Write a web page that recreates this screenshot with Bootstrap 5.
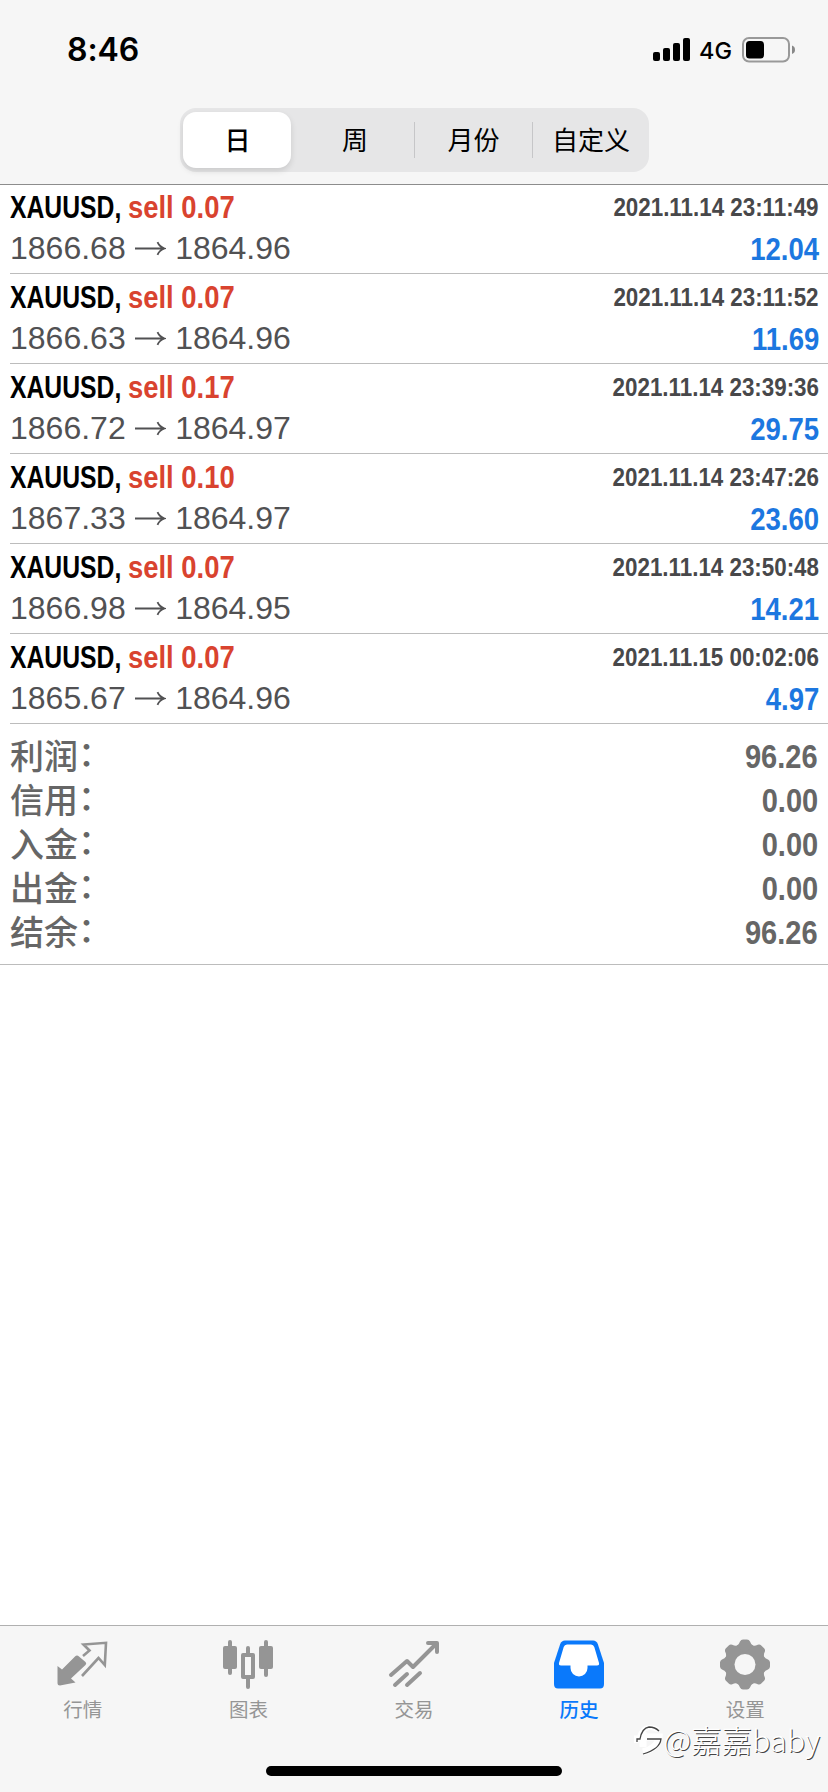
<!DOCTYPE html>
<html lang="zh-CN">
<head>
<meta charset="utf-8">
<meta name="viewport" content="width=device-width, initial-scale=1">
<title>历史</title>
<link href="https://cdn.jsdelivr.net/npm/bootstrap@5.3.0/dist/css/bootstrap.min.css" rel="stylesheet">
<script src="https://cdn.jsdelivr.net/npm/bootstrap@5.3.0/dist/js/bootstrap.bundle.min.js" defer></script>
<style>
body{font-family:"Liberation Sans","Noto Sans CJK SC",sans-serif;color:#000;background:#fff}
.screen{height:1792px;overflow:hidden}
.topbar{height:185px;background:#f6f6f6;border-bottom:1px solid #8c8c8c}
.statusbar{height:108px;padding:0 33px 8px 67px;font-family:Inter,sans-serif}
.clock{font-size:32px;font-weight:600;line-height:1;letter-spacing:-.1px}
.net{font-size:23.5px;font-weight:500;line-height:1;margin:2px 10px 0 8px}
.segments{width:469px;height:64px;background:#e6e6e7;border-radius:16px;padding:4px 0 4px 3px;font:26px "Noto Sans CJK SC",sans-serif}
.segments .nav-link{color:#000;padding:0 0 2px 2px;border-radius:0;line-height:54px;position:relative}
.segments .active{background:#fff;border-radius:13px;margin-right:4px;font-weight:500;box-shadow:0 3px 6px rgba(0,0,0,.12)}
.segments .split::before{content:"";position:absolute;left:0;top:10px;width:1px;height:36px;background:#c6c6c8}
.seg-day{width:112px}
.seg-week{width:119px}
.seg-month{width:118px}
.seg-custom{width:117px}
.deal{height:90px;margin-left:10px;padding:3px 9px 0 0;border-bottom:1px solid #bcbcbc;white-space:nowrap}
.deal:first-child{height:89px;padding-top:2px}
.tight{font-weight:700;transform:scaleX(.86);transform-origin:100% 50%}
.symbol{font-size:31.5px;line-height:40px;font-weight:700}
.pair,.side{display:inline-block;transform-origin:0 50%}
.pair{width:118px;transform:scaleX(.785)}
.side{color:#d9432f;transform:scaleX(.87)}
.stamp{font-size:26px;line-height:41px;margin-bottom:-1px;color:#48484a}
.price{font-size:32px;line-height:42px;color:#515153}
.price svg{margin:0 9px 5px 9.5px}
.gain{font-size:32px;line-height:44px;color:#1c77e0}
.summary{height:241px;padding:9px 10px 0 10px;border-bottom:1px solid #bcbcbc;color:#666}
.sumrow{height:44px;line-height:47px}
.sumrow .caption{font:500 34px/44px "Noto Sans CJK SC",sans-serif}
.colon{display:inline-block;transform:translate(0,-3px)}
.sumrow .tight{font-size:33px;transform:scaleX(.88)}
.tabs{height:167px;background:#f6f6f6;border-top:1px solid #b0b0b0;color:#959595}
.tabs .nav-link{color:inherit;padding:11.5px 0 0;font:19.5px/26px "Noto Sans CJK SC",sans-serif}
.tabs .nav-link.active{color:#0a79fb;font-weight:500;margin-left:-1px}
.tabs svg{display:block;margin:0 auto 6px}
.homebar{left:266px;bottom:16px;width:296px;height:10px;border-radius:5px;background:#000}
.credit{right:8px;bottom:32px;font:300 30.5px/42px "Noto Sans CJK SC",sans-serif;color:#fff;text-shadow:1px 1px 0 #444;white-space:nowrap}
</style>
</head>
<body>
<div class="screen d-flex flex-column position-relative">
<header class="topbar flex-shrink-0">
  <div class="statusbar d-flex align-items-center justify-content-between">
    <span class="clock">8:46</span>
    <div class="d-flex align-items-center">
      <svg width="38" height="24" viewBox="0 0 38 24"><rect x="0" y="14" width="7" height="9" rx="2"/><rect x="10" y="10" width="7" height="13" rx="2"/><rect x="20" y="5" width="7" height="18" rx="2"/><rect x="30" y="0" width="7" height="23" rx="2"/></svg>
      <span class="net">4G</span>
      <svg width="53" height="26" viewBox="0 0 53 26"><rect x="1" y="1" width="46" height="23.5" rx="6" fill="none" stroke="#999" stroke-width="2"/><rect x="4" y="4" width="18" height="17.5" rx="3.5"/><path d="M50 8.5q3 1 3 4.2t-3 4.3z" fill="#888"/></svg>
    </div>
  </div>
  <nav class="segments nav flex-nowrap mx-auto text-center">
    <div class="seg-day"><a class="nav-link active">日</a></div>
    <div class="seg-week"><a class="nav-link">周</a></div>
    <div class="seg-month"><a class="nav-link split">月份</a></div>
    <div class="seg-custom"><a class="nav-link split">自定义</a></div>
  </nav>
</header>
<svg width="0" height="0" class="position-absolute"><symbol id="arrow" viewBox="0 0 31 15"><path d="M0 7.5H29M22.5 1.2Q24.500 5.800 29.500 7.500Q24.500 9.200 22.500 13.800" fill="none" stroke="#515153" stroke-width="1.8"/></symbol></svg>
<main class="flex-grow-1">
  <section>
    <div class="deal"><div class="d-flex justify-content-between"><span class="symbol"><span class="pair">XAUUSD,</span><span class="side">sell 0.07</span></span><span class="tight stamp">2021.11.14 23:11:49</span></div><div class="d-flex justify-content-between"><span class="price">1866.68<svg width="31" height="15"><use href="#arrow"/></svg>1864.96</span><span class="tight gain">12.04</span></div></div>
    <div class="deal"><div class="d-flex justify-content-between"><span class="symbol"><span class="pair">XAUUSD,</span><span class="side">sell 0.07</span></span><span class="tight stamp">2021.11.14 23:11:52</span></div><div class="d-flex justify-content-between"><span class="price">1866.63<svg width="31" height="15"><use href="#arrow"/></svg>1864.96</span><span class="tight gain">11.69</span></div></div>
    <div class="deal"><div class="d-flex justify-content-between"><span class="symbol"><span class="pair">XAUUSD,</span><span class="side">sell 0.17</span></span><span class="tight stamp">2021.11.14 23:39:36</span></div><div class="d-flex justify-content-between"><span class="price">1866.72<svg width="31" height="15"><use href="#arrow"/></svg>1864.97</span><span class="tight gain">29.75</span></div></div>
    <div class="deal"><div class="d-flex justify-content-between"><span class="symbol"><span class="pair">XAUUSD,</span><span class="side">sell 0.10</span></span><span class="tight stamp">2021.11.14 23:47:26</span></div><div class="d-flex justify-content-between"><span class="price">1867.33<svg width="31" height="15"><use href="#arrow"/></svg>1864.97</span><span class="tight gain">23.60</span></div></div>
    <div class="deal"><div class="d-flex justify-content-between"><span class="symbol"><span class="pair">XAUUSD,</span><span class="side">sell 0.07</span></span><span class="tight stamp">2021.11.14 23:50:48</span></div><div class="d-flex justify-content-between"><span class="price">1866.98<svg width="31" height="15"><use href="#arrow"/></svg>1864.95</span><span class="tight gain">14.21</span></div></div>
    <div class="deal"><div class="d-flex justify-content-between"><span class="symbol"><span class="pair">XAUUSD,</span><span class="side">sell 0.07</span></span><span class="tight stamp">2021.11.15 00:02:06</span></div><div class="d-flex justify-content-between"><span class="price">1865.67<svg width="31" height="15"><use href="#arrow"/></svg>1864.96</span><span class="tight gain">4.97</span></div></div>
  </section>
  <section class="summary">
    <div class="sumrow d-flex justify-content-between"><span class="caption">利润<span class="colon">：</span></span><span class="tight">96.26</span></div>
    <div class="sumrow d-flex justify-content-between"><span class="caption">信用<span class="colon">：</span></span><span class="tight">0.00</span></div>
    <div class="sumrow d-flex justify-content-between"><span class="caption">入金<span class="colon">：</span></span><span class="tight">0.00</span></div>
    <div class="sumrow d-flex justify-content-between"><span class="caption">出金<span class="colon">：</span></span><span class="tight">0.00</span></div>
    <div class="sumrow d-flex justify-content-between"><span class="caption">结余<span class="colon">：</span></span><span class="tight">96.26</span></div>
  </section>
</main>
<footer class="flex-shrink-0">
  <nav class="tabs nav flex-nowrap align-items-start text-center">
    <div class="col"><a class="nav-link"><svg width="52" height="52" viewBox="0 0 52 52"><path d="M.5 28 5 31.500 18 18.500Q20 16.500 22 18.500L28.500 24Q30 25.500 28.500 27L14 40.500 18.500 44.500 3 47.500Q.5 47.500 .5 45Z" fill="currentColor"/><path d="M26 18 32.500 12.500 26.500 6.500 49 4.800 47.800 27 41.500 20 25 38" fill="none" stroke="currentColor" stroke-width="2.600"/></svg>行情</a></div>
    <div class="col"><a class="nav-link"><svg width="52" height="52" viewBox="0 0 52 52" fill="currentColor"><rect x="1" y="8" width="14" height="23" rx="2"/><rect x="6" y="2" width="4" height="35" rx="2"/><path d="M21 15h10q2 0 2 2v22q0 2-2 2H21q-2 0-2-2V17q0-2 2-2m2 4v18h6V19z" fill-rule="evenodd"/><rect x="24" y="8" width="4" height="9" rx="2"/><rect x="24" y="39" width="4" height="12" rx="2"/><rect x="37" y="8" width="14" height="23" rx="2"/><rect x="42" y="2" width="4" height="37" rx="2"/></svg>图表</a></div>
    <div class="col"><a class="nav-link"><svg width="52" height="52" viewBox="0 0 52 52" fill="none" stroke="currentColor" stroke-width="4" stroke-linecap="round" stroke-linejoin="round"><path d="M3 37 19 23l6 6L48 6M40 5h9v9"/><path d="m7 47 12-11M19 47l13-12"/></svg>交易</a></div>
    <div class="col"><a class="nav-link active"><svg width="52" height="52" viewBox="0 0 52 52"><path d="M12 2.500H40Q43.500 2.500 44.800 6L51 25V46Q51 50.500 47 50.500H5Q1 50.500 1 46V25L7.200 6Q8.500 2.500 12 2.500Z" fill="currentColor"/><path d="M14 6.500H38Q40.500 6.500 41.300 9L46 25Q46.500 27.500 44 27.500H34.500V30A8.500 8.500 0 0 1 17.500 30V27.500H8Q5.500 27.500 6 25L10.700 9Q11.500 6.500 14 6.500Z" fill="#fff"/></svg>历史</a></div>
    <div class="col"><a class="nav-link"><svg width="52" height="52" viewBox="-26 -26.500 52 52"><g fill="currentColor"><circle r="20.500"/><g id="teeth"><path id="tooth" d="M-8-19Q-6-20-5-23Q-4-25-2-25H2Q4-25 5-23Q6-20 8-19V19Q6 20 5 23Q4 25 2 25H-2Q-4 25-5 23Q-6 20-8 19Z"/><use href="#tooth" transform="rotate(90)"/></g><use href="#teeth" transform="rotate(45)"/></g><circle r="10.500" fill="#f6f6f6"/></svg>设置</a></div>
  </nav>
</footer>
<div class="homebar position-absolute"></div>
<div class="credit position-absolute d-flex align-items-center"><svg width="29" height="32" viewBox="0 0 29 32"><g fill="none" stroke="#444" stroke-width="1.300"><path d="M2 20V15H5Q8 5 15 4.500Q20 4 24 7" stroke="#fff" stroke-width="5"/><path d="M8 14H25Q24 25 9 29M9 9V24" stroke="#fff" stroke-width="7"/><path d="M3 19V16H6Q8 5 15 4Q21 4 25 8M13 16H27Q26 26 9 31"/></g></svg><span>@嘉嘉baby</span></div>
</div>
</body>
</html>
